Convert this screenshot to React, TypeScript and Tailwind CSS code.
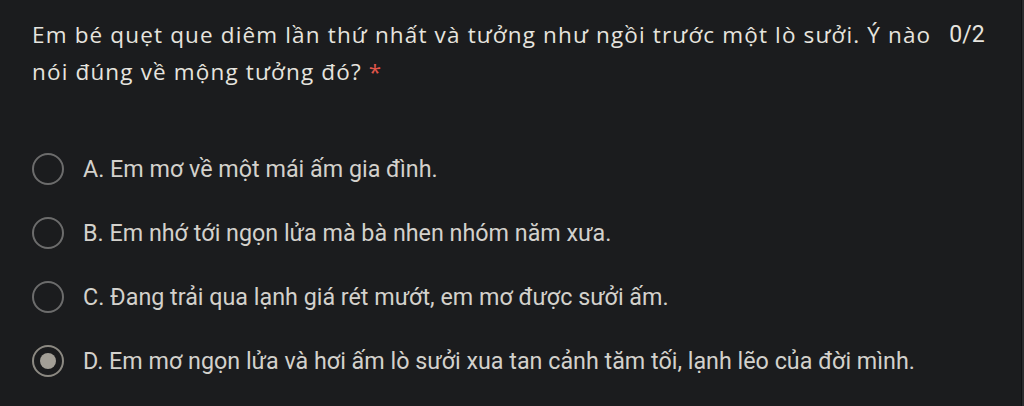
import React from 'react';

const options = [
  'A. Em mơ về một mái ấm gia đình.',
  'B. Em nhớ tới ngọn lửa mà bà nhen nhóm năm xưa.',
  'C. Đang trải qua lạnh giá rét mướt, em mơ được sưởi ấm.',
  'D. Em mơ ngọn lửa và hơi ấm lò sưởi xua tan cảnh tăm tối, lạnh lẽo của đời mình.',
];

export default function App() {
  const selected = 3;

  return (
    <div className="flex h-[406px] w-[1024px] bg-[#1b1c1e]">
      <div className="flex-1 pl-8 pt-[16px]">
        {/* Question header */}
        <div className="flex items-start">
          <h2 className="font-['Open_Sans',sans-serif] text-[22.5px] leading-[37px] tracking-[1.15px] text-[#e6e4df]">
            <span className="block whitespace-nowrap">
              Em bé quẹt que diêm lần thứ nhất và tưởng như ngồi trước một lò sưởi. Ý nào
            </span>
            <span className="block whitespace-nowrap">
              nói đúng về mộng tưởng đó? <span className="text-[#e0554a]">*</span>
            </span>
          </h2>
          <span className="ml-[18px] font-['Roboto',sans-serif] text-[23px] leading-[37px] text-[#e6e4df]">
            0/2
          </span>
        </div>

        {/* Options */}
        <div className="mt-[63px] flex flex-col gap-[32px]">
          {options.map((text, i) => (
            <div key={i} className="flex h-[32px] items-center">
              <div
                className={
                  i === selected
                    ? 'flex h-[32px] w-[32px] items-center justify-center rounded-full border-2 border-[#8c8982]'
                    : 'h-[32px] w-[32px] rounded-full border-2 border-[#6c6c6c]'
                }
              >
                {i === selected && <div className="h-[16px] w-[16px] rounded-full bg-[#a39f97]" />}
              </div>
              <span className="ml-[19px] font-['Roboto',sans-serif] text-[23.3px] text-[#d3d1cc]">{text}</span>
            </div>
          ))}
        </div>
      </div>
      <div className="w-px bg-[#111214]" />
      <div className="w-[2px] bg-[#2a2b2d]" />
    </div>
  );
}
